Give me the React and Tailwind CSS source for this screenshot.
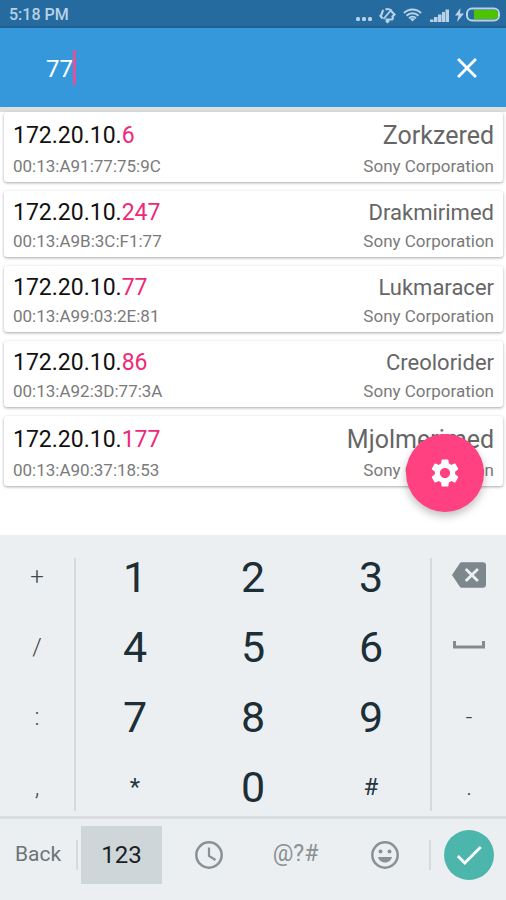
import { MdBackspace, MdCheck, MdClose, MdSettings } from "react-icons/md";

const hosts = [
  { subnet: "172.20.10.", host: "6", mac: "00:13:A91:77:75:9C", name: "Zorkzered", vendor: "Sony Corporation", large: true },
  { subnet: "172.20.10.", host: "247", mac: "00:13:A9B:3C:F1:77", name: "Drakmirimed", vendor: "Sony Corporation" },
  { subnet: "172.20.10.", host: "77", mac: "00:13:A99:03:2E:81", name: "Lukmaracer", vendor: "Sony Corporation" },
  { subnet: "172.20.10.", host: "86", mac: "00:13:A92:3D:77:3A", name: "Creolorider", vendor: "Sony Corporation" },
  { subnet: "172.20.10.", host: "177", mac: "00:13:A90:37:18:53", name: "Mjolmerimed", vendor: "Sony Corporation", large: true },
];

const digits = ["1", "2", "3", "4", "5", "6", "7", "8", "9", "*", "0", "#"];

function StatusBar() {
  return (
    <div className="flex h-7 items-center justify-between border-b-2 border-[#205f8f] bg-[#266b9f] pt-1 pr-[6px] pl-[9px] text-[#b9d2e8]">
      <span className="text-base font-medium">5:18 PM</span>
      <div className="flex items-center">
        <svg width="16" height="18" viewBox="0 0 16 18" fill="currentColor" aria-hidden="true">
          <rect x="0" y="11" width="4" height="4" rx="1.500" />
          <rect x="6" y="11" width="4" height="4" rx="1.500" />
          <rect x="12" y="11" width="4" height="4" rx="1.500" />
        </svg>
        <svg className="ml-[7px]" width="17" height="18" viewBox="0 0 17 18" fill="none" stroke="currentColor" aria-hidden="true">
          <path d="M6.500 3.500C9 2.500 12 3.500 13 6l2.500 2.500-2 2c.5 1.500.5 2.500-.5 3H6.500M10 14.500 8.500 16 7 14.500M3.500 12.500 1.500 10l1.500-2.500C3 6 3.500 5 4.500 4" strokeWidth="2.200" />
          <path d="M4.500 13 12.500 3.500" strokeWidth="1.800" />
        </svg>
        <svg className="ml-[7px]" width="19" height="18" viewBox="0 0 19 18" fill="none" stroke="currentColor" strokeWidth="2" aria-hidden="true">
          <path d="M1 7a12 12 0 0 1 17 0M3.500 9.700a8.500 8.500 0 0 1 12 0M6 12.200a5 5 0 0 1 7 0" />
          <path d="m7 13 2.500 2.500L12 13a4 4 0 0 0-5 0z" fill="currentColor" stroke="none" />
        </svg>
        <svg className="ml-2" width="19" height="18" viewBox="0 0 19 18" fill="currentColor" aria-hidden="true">
          <path d="M0 13.500h3.500V16H0zM4 11h3.500v5H4zM8 8.500h3.500V16H8zM12 6h3v10h-3zM15.500 3.500H19V16h-3.500z" />
        </svg>
        <svg className="ml-[6px]" width="9" height="18" viewBox="0 0 9 18" fill="currentColor" aria-hidden="true">
          <path d="M5.500 2 0 9.500h3.500L2 16l7-8.500H5z" />
        </svg>
        <svg className="ml-[2px]" width="34" height="18" viewBox="0 0 34 18" aria-hidden="true">
          <rect x="1" y="2.500" width="32" height="12" rx="5" fill="none" stroke="currentColor" strokeWidth="2" />
          <path d="M8 4h20.500a3.500 3.500 0 0 1 3.500 3.500v2a3.500 3.500 0 0 1-3.500 3.500H8z" fill="#4dc304" />
        </svg>
      </div>
    </div>
  );
}

function SearchBar() {
  return (
    <header className="relative flex h-[79px] items-center bg-[#3498db] pr-[22px] pl-[46px] shadow-[0_5px_0_#dededd]">
      <input
        type="text"
        aria-label="Search hosts"
        defaultValue="77"
        className="field-sizing-content bg-transparent pt-[2px] text-2xl text-white outline-none"
      />
      <span className="h-[35px] w-[3px] bg-[#d9549b]" />
      <button type="button" aria-label="Clear search" className="ml-auto text-white">
        <MdClose size={34} />
      </button>
    </header>
  );
}

function HostCard({ item }) {
  return (
    <li className="rounded-[3px] bg-white px-[9px] pt-2 pb-[2px] shadow-[0_1px_3px_rgba(0,0,0,0.35)]">
      <div className="flex items-center justify-between">
        <span className="text-[23px] leading-7 text-[#111]">
          {item.subnet}
          <span className="text-[#f0287a]">{item.host}</span>
        </span>
        <span className={item.large ? "text-[25px] leading-8 text-[#666]" : "text-[22px] leading-7 text-[#666]"}>
          {item.name}
        </span>
      </div>
      <div className="flex items-center justify-between text-[17px] leading-7 text-[#7a7a7a]">
        <span>{item.mac}</span>
        <span>{item.vendor}</span>
      </div>
    </li>
  );
}

function SideKey({ label, children }) {
  return (
    <button type="button" aria-label={label} className="flex h-[70px] items-center justify-center pt-3 text-2xl font-light text-[#3f484c]">
      {children}
    </button>
  );
}

function IconKey({ label, children }) {
  return (
    <button type="button" aria-label={label} className="flex h-[70px] items-center justify-center pt-2">
      {children}
    </button>
  );
}

function Keyboard() {
  return (
    <section aria-label="Keyboard" className="bg-[#eceff1]">
      <div className="flex border-b-[3px] border-[#d9dfe1] pt-px">
        <div className="grid w-[74px] grid-cols-1">
          <SideKey label="Plus">+</SideKey>
          <SideKey label="Slash">/</SideKey>
          <SideKey label="Colon">:</SideKey>
          <SideKey label="Comma">,</SideKey>
        </div>
        <div className="mt-[22px] mb-[5px] w-[2px] bg-[#d5dadc]" />
        <div className="grid flex-1 grid-cols-3">
          {digits.map((d) => (
            <button
              key={d}
              type="button"
              className={
                d === "*" || d === "#"
                  ? "flex h-[70px] items-center justify-center pt-3 text-2xl text-[#24363e]"
                  : "flex h-[70px] items-center justify-center pt-3 text-[43px] text-[#1c2f37]"
              }
            >
              {d}
            </button>
          ))}
        </div>
        <div className="mt-[22px] mb-[5px] w-[2px] bg-[#d5dadc]" />
        <div className="grid w-[74px] grid-cols-1">
          <IconKey label="Backspace"><MdBackspace size={34} color="#7c888b" /></IconKey>
          <IconKey label="Space">
            <svg width="32" height="8" viewBox="0 0 32 8" fill="none" stroke="#858b8d" strokeWidth="3" aria-hidden="true">
              <path d="M1.500 0v6h29V0" />
            </svg>
          </IconKey>
          <SideKey label="Hyphen">-</SideKey>
          <SideKey label="Period">.</SideKey>
        </div>
      </div>
      <div className="flex h-[81px] items-center pb-[10px]">
        <button type="button" className="w-[76px] text-[21px] text-[#6b7679]">Back</button>
        <div className="h-[30px] w-[2px] bg-[#d5dadc]" />
        <button type="button" className="ml-[3px] h-[58px] w-[81px] bg-[#cfd6d9] text-2xl text-[#1b1f21]">123</button>
        <div className="grid flex-1 grid-cols-3 items-center text-[#899194]">
          <button type="button" aria-label="Recent" className="flex justify-center pl-1">
            <svg width="28" height="28" viewBox="0 0 28 28" fill="none" stroke="currentColor" aria-hidden="true">
              <circle cx="14" cy="14" r="12.700" strokeWidth="2.500" />
              <path d="M14 6.500V15l6.500 4" strokeWidth="2.200" />
            </svg>
          </button>
          <button type="button" className="text-[23px]">@?#</button>
          <button type="button" aria-label="Emoji" className="flex justify-center">
            <svg width="28" height="28" viewBox="0 0 28 28" aria-hidden="true">
              <circle cx="14" cy="14" r="12.700" fill="none" stroke="currentColor" strokeWidth="2.500" />
              <circle cx="9.500" cy="10.500" r="2" fill="currentColor" />
              <circle cx="18.500" cy="10.500" r="2" fill="currentColor" />
              <path d="M7 16h14c-.8 3.300-3.600 5.500-7 5.500S7.800 19.300 7 16z" fill="currentColor" />
            </svg>
          </button>
        </div>
        <div className="h-[30px] w-[2px] bg-[#d5dadc]" />
        <div className="flex w-[75px] justify-center">
          <button type="button" aria-label="Done" className="flex size-[50px] items-center justify-center rounded-full bg-[#4db6ac] text-white">
            <MdCheck size={34} />
          </button>
        </div>
      </div>
    </section>
  );
}

export default function App() {
  return (
    <div className="flex min-h-screen flex-col bg-white font-[Roboto,sans-serif]">
      <StatusBar />
      <SearchBar />
      <main className="relative flex-1 pt-[5px]">
        <ul className="flex flex-col gap-[9px] px-1 pr-[3px]">
          {hosts.map((item) => (
            <HostCard key={item.mac} item={item} />
          ))}
        </ul>
        <button
          type="button"
          aria-label="Settings"
          className="absolute right-[22px] bottom-[23px] flex size-[78px] items-center justify-center rounded-full bg-[#ff4081] text-white shadow-[0_4px_8px_rgba(0,0,0,0.25)]"
        >
          <MdSettings size={34} />
        </button>
      </main>
      <Keyboard />
    </div>
  );
}
